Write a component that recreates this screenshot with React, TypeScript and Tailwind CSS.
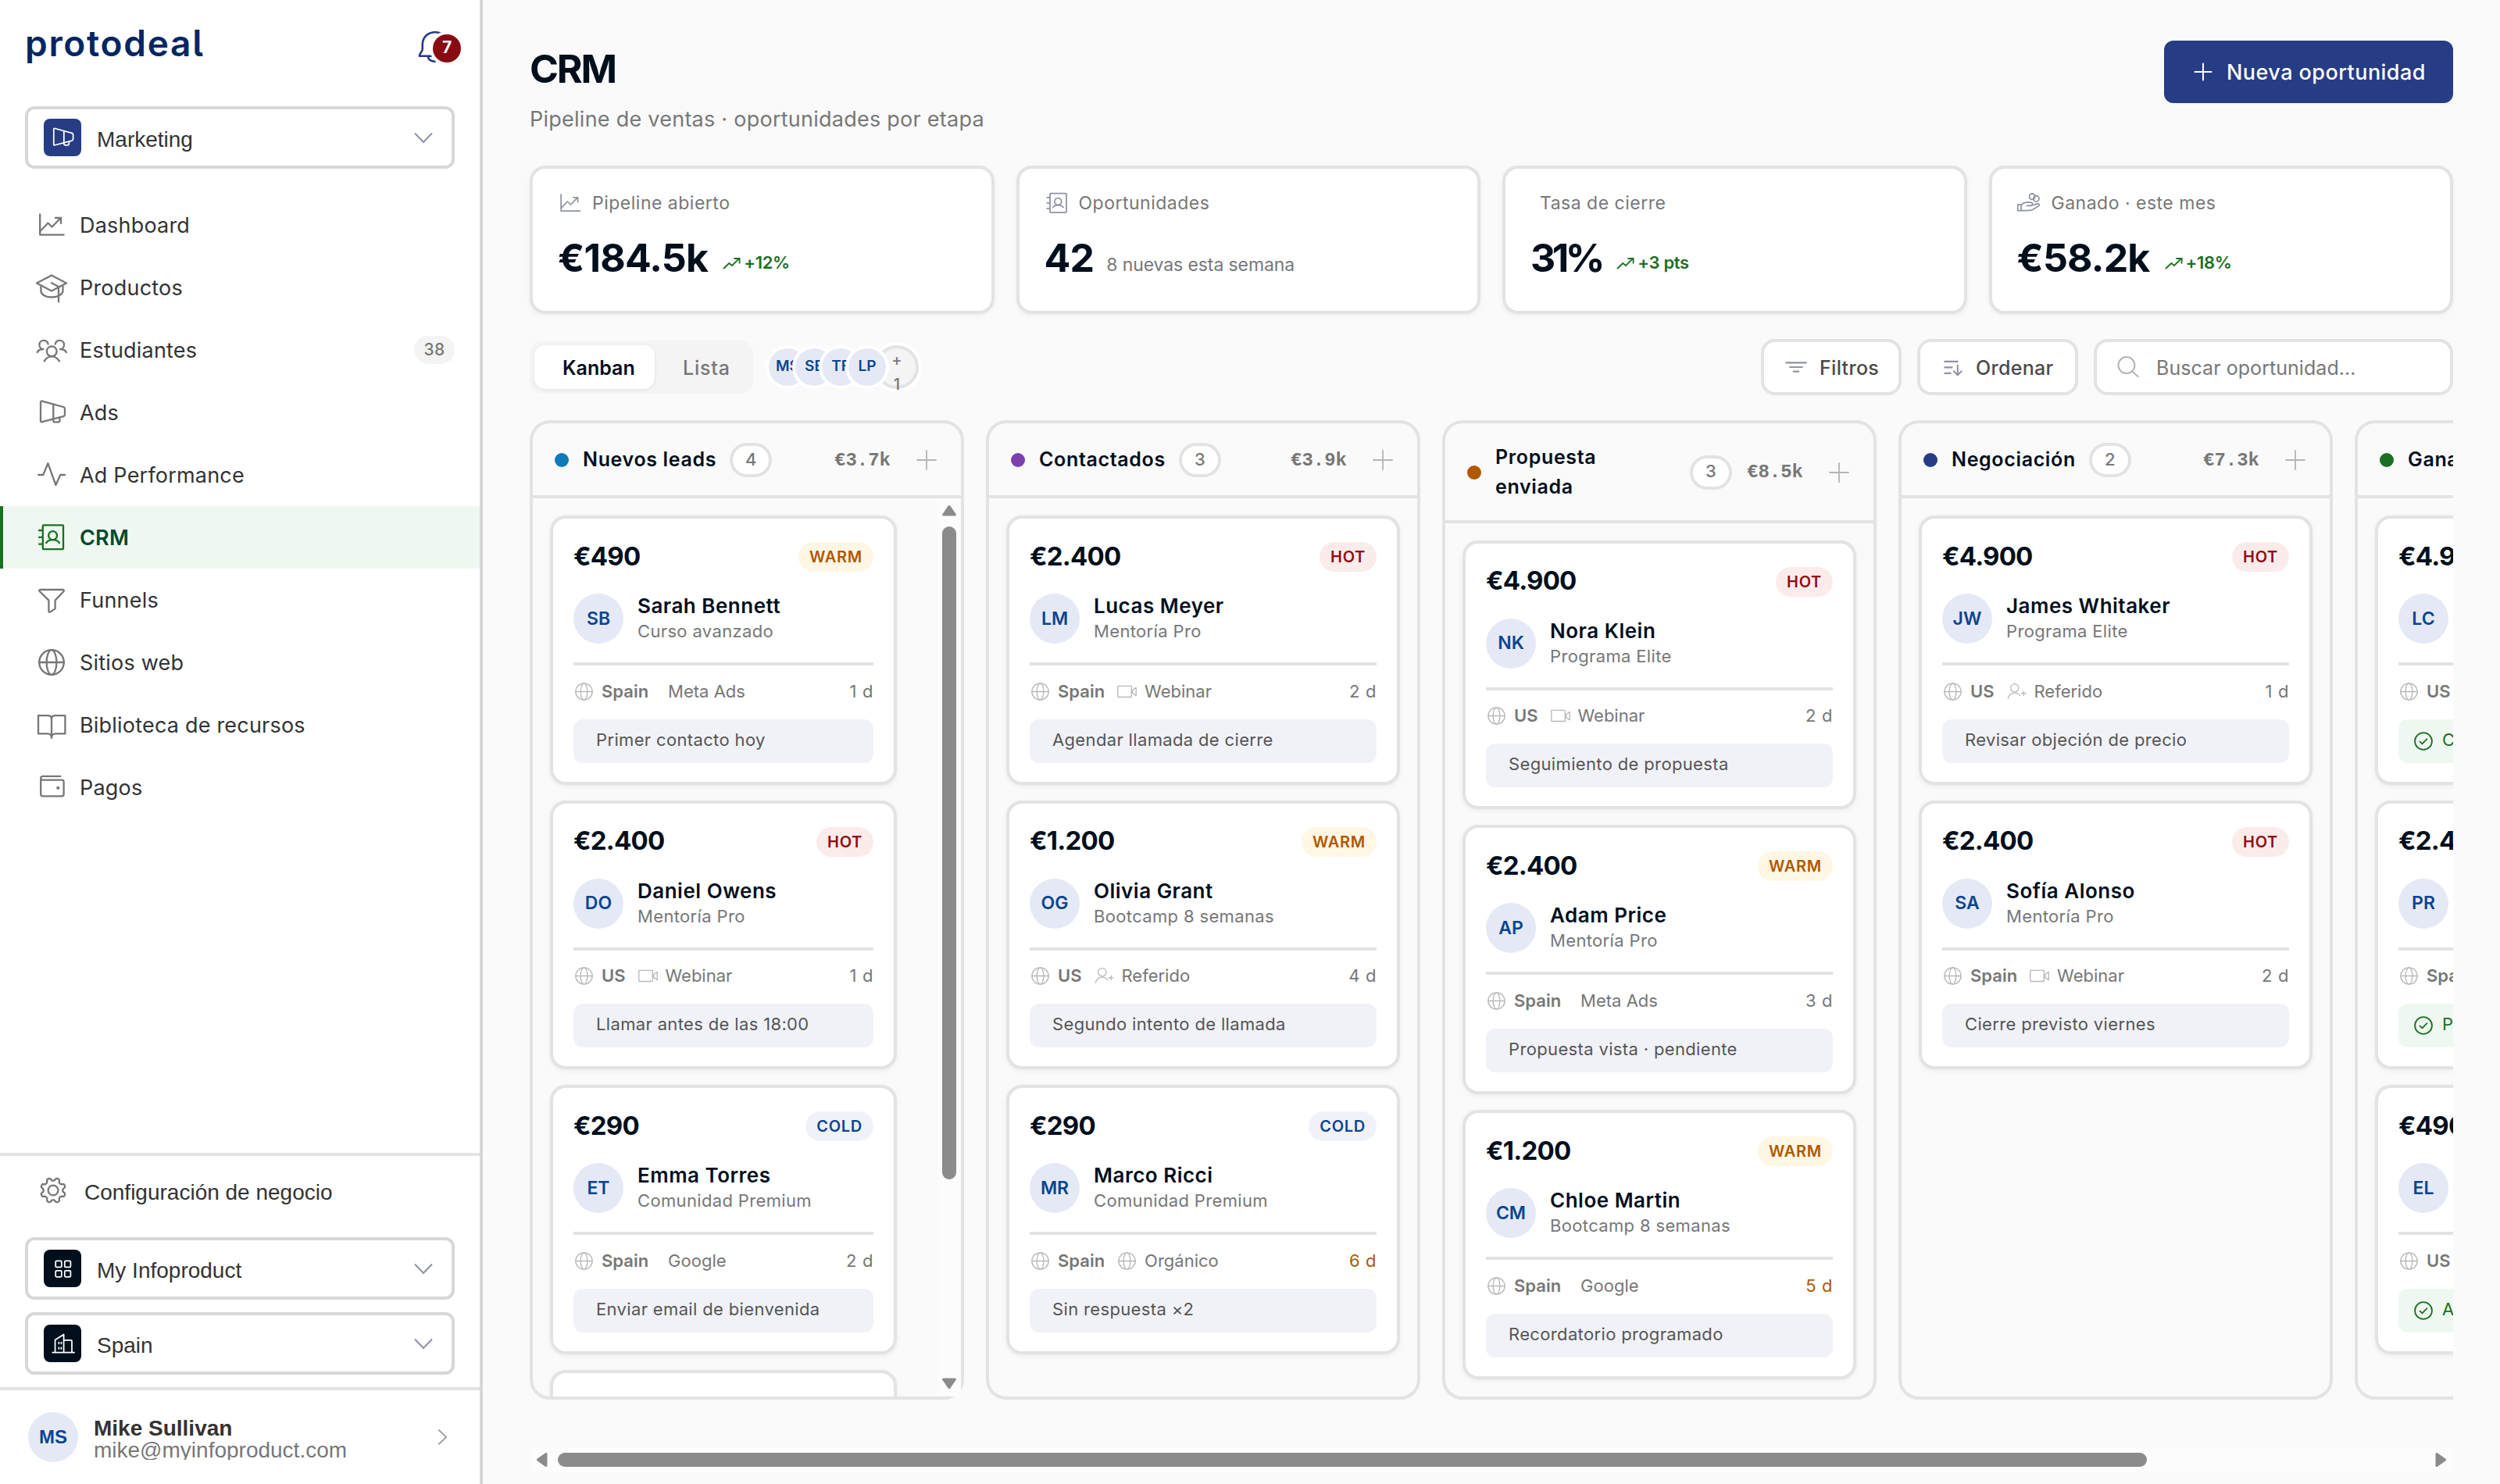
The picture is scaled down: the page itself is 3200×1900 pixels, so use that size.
import type { ReactNode } from 'react'

type Temp = 'WARM' | 'HOT' | 'COLD'
type Source = 'Webinar' | 'Referido' | 'Orgánico' | 'Meta Ads' | 'Google'

interface Deal {
  price: string
  temp: Temp
  initials: string
  name: string
  product: string
  country: string
  source: Source
  days: number
  note: string
  won?: boolean
}

interface Stage {
  title: string
  dot: string
  total: string
  deals: Deal[]
}

const STAGES: Stage[] = [
  {
    title: 'Nuevos leads',
    dot: 'bg-[#0c7bb8]',
    total: '€3.7k',
    deals: [
      { price: '€490', temp: 'WARM', initials: 'SB', name: 'Sarah Bennett', product: 'Curso avanzado', country: 'Spain', source: 'Meta Ads', days: 1, note: 'Primer contacto hoy' },
      { price: '€2.400', temp: 'HOT', initials: 'DO', name: 'Daniel Owens', product: 'Mentoría Pro', country: 'US', source: 'Webinar', days: 1, note: 'Llamar antes de las 18:00' },
      { price: '€290', temp: 'COLD', initials: 'ET', name: 'Emma Torres', product: 'Comunidad Premium', country: 'Spain', source: 'Google', days: 2, note: 'Enviar email de bienvenida' },
      { price: '€490', temp: 'WARM', initials: 'HP', name: 'Hugo Prieto', product: 'Curso avanzado', country: 'Spain', source: 'Meta Ads', days: 3, note: 'Primer contacto' },
    ],
  },
  {
    title: 'Contactados',
    dot: 'bg-[#7b3fb0]',
    total: '€3.9k',
    deals: [
      { price: '€2.400', temp: 'HOT', initials: 'LM', name: 'Lucas Meyer', product: 'Mentoría Pro', country: 'Spain', source: 'Webinar', days: 2, note: 'Agendar llamada de cierre' },
      { price: '€1.200', temp: 'WARM', initials: 'OG', name: 'Olivia Grant', product: 'Bootcamp 8 semanas', country: 'US', source: 'Referido', days: 4, note: 'Segundo intento de llamada' },
      { price: '€290', temp: 'COLD', initials: 'MR', name: 'Marco Ricci', product: 'Comunidad Premium', country: 'Spain', source: 'Orgánico', days: 6, note: 'Sin respuesta ×2' },
    ],
  },
  {
    title: 'Propuesta enviada',
    dot: 'bg-[#b05800]',
    total: '€8.5k',
    deals: [
      { price: '€4.900', temp: 'HOT', initials: 'NK', name: 'Nora Klein', product: 'Programa Elite', country: 'US', source: 'Webinar', days: 2, note: 'Seguimiento de propuesta' },
      { price: '€2.400', temp: 'WARM', initials: 'AP', name: 'Adam Price', product: 'Mentoría Pro', country: 'Spain', source: 'Meta Ads', days: 3, note: 'Propuesta vista · pendiente' },
      { price: '€1.200', temp: 'WARM', initials: 'CM', name: 'Chloe Martin', product: 'Bootcamp 8 semanas', country: 'Spain', source: 'Google', days: 5, note: 'Recordatorio programado' },
    ],
  },
  {
    title: 'Negociación',
    dot: 'bg-[#263c85]',
    total: '€7.3k',
    deals: [
      { price: '€4.900', temp: 'HOT', initials: 'JW', name: 'James Whitaker', product: 'Programa Elite', country: 'US', source: 'Referido', days: 1, note: 'Revisar objeción de precio' },
      { price: '€2.400', temp: 'HOT', initials: 'SA', name: 'Sofía Alonso', product: 'Mentoría Pro', country: 'Spain', source: 'Webinar', days: 2, note: 'Cierre previsto viernes' },
    ],
  },
  {
    title: 'Ganado',
    dot: 'bg-[#1b6f22]',
    total: '€7.8k',
    deals: [
      { price: '€4.900', temp: 'HOT', initials: 'LC', name: 'Laura Costa', product: 'Programa Elite', country: 'US', source: 'Webinar', days: 1, note: 'Cobrado', won: true },
      { price: '€2.400', temp: 'HOT', initials: 'PR', name: 'Pablo Ruiz', product: 'Mentoría Pro', country: 'Spain', source: 'Webinar', days: 2, note: 'Pagado', won: true },
      { price: '€490', temp: 'WARM', initials: 'EL', name: 'Eva López', product: 'Curso avanzado', country: 'US', source: 'Google', days: 3, note: 'Acceso enviado', won: true },
    ],
  },
]

const TEMP_STYLE: Record<Temp, string> = {
  WARM: 'bg-[#fff6e4] text-[#b05800]',
  HOT: 'bg-[#fcebeb] text-[#8f0d14]',
  COLD: 'bg-[#f0f2f9] text-[#0a4590]',
}

// scalloped outline of the settings gear, eight lobes
const GEAR = Array.from({ length: 96 }, (_, i) => {
  const a = (i / 96) * Math.PI * 2
  const r = 14.2 + 1.9 * Math.tanh(2 * Math.cos(8 * a + Math.PI))
  return `${(20 + r * Math.sin(a)).toFixed(2)},${(20 - r * Math.cos(a)).toFixed(2)}`
}).join(' ')

const ICONS: Record<string, ReactNode> = {
  chart: (
    <>
      <path d="M5.2 6.5V32.6H35.7" />
      <path d="M5.5 28 15.5 17.5 20.5 22.5 31.5 11.3M25 11H32V18" />
    </>
  ),
  cap: (
    <>
      <path d="M20 4.6 39 14.6 20 24.4 1 14.6Z" />
      <path d="M6.4 19V25C7 29.5 13 32.5 20 32.5S33.5 29.5 34.5 25V19" />
      <path d="M20 14.3 29 19V38.4" />
    </>
  ),
  people: (
    <>
      <circle cx="20.2" cy="21.8" r="6.4" />
      <path d="M10.7 34.4C13 30.5 16 28.4 20.2 28.4S27.5 30.5 29.8 34.4" />
      <path d="M15.6 12.4C15 9.5 12.8 7.8 10 7.8 6.8 7.8 4.4 10.2 4.4 13.4 4.4 16.6 6.6 19 9.4 19 6 19 3.2 20 1.6 23" />
      <path d="M24.8 12.4C25.4 9.5 27.6 7.8 30.4 7.8 33.6 7.8 36 10.2 36 13.4 36 16.6 33.8 19 31 19 34.4 19 37.2 20 38.8 23" />
    </>
  ),
  megaphone: (
    <>
      <path d="M6 7C6 5.8 6.8 5.3 8 5.6L35 13C36.4 13.4 37 14.4 37 15.6V22.6C37 24 36.4 24.8 35 25.2L8 32.2C6.8 32.5 6 32 6 30.8Z" />
      <path d="M22.3 10V28.4M22.3 28.6V30.4C22.3 31.6 23 32.4 24.2 32.4H28.4C29.7 32.4 30.4 31.6 30.4 30.4V26.6" />
    </>
  ),
  pulse: <path d="M3.2 20H9.2L15.4 5.3 25.4 33 31.2 20H37" />,
  contacts: (
    <>
      <rect x="8.8" y="4.4" width="26.2" height="30.8" rx="1" />
      <path d="M4 11H8.8M4 19.8H8.8M4 28.6H8.8" />
      <circle cx="21.6" cy="17.6" r="5.5" />
      <path d="M13.2 27C15 24.5 18 23.2 21.6 23.2S28.2 24.5 30 27" />
    </>
  ),
  funnel: (
    <path d="M5.5 7H34.5C36 7 36 8.4 35.4 9.2L24.6 20.6V31.4L18.5 35.4C17 36 16.4 35.4 16.4 34.2V20.6L4.8 9.2C4 8.4 4.2 7 5.5 7Z" />
  ),
  globe: (
    <>
      <circle cx="20" cy="20" r="15.8" />
      <ellipse cx="20" cy="20" rx="6.4" ry="15.8" />
      <path d="M4.2 20H35.8" />
    </>
  ),
  book: (
    <path d="M20 37C20 33 18 31.4 15 31.4H3V8.2H15C18 8.2 20 9.8 20 12.4V36 12.4C20 9.8 22 8.2 25 8.2H37.4V31.4H25C22 31.4 20 33 20 37Z" />
  ),
  wallet: (
    <>
      <path d="M31.3 5.8H9C7 5.8 6.2 6.8 6.2 8.4V28.6C6.2 30.6 7 31.4 8.8 31.4H33C35 31.4 35.6 30.6 35.6 28.8V13C35.6 11.2 35 10.6 33.2 10.6H8.4C7 10.6 6.2 10 6.2 8.4" />
      <circle cx="28.3" cy="20.8" r="1" fill="currentColor" />
    </>
  ),
  gear: (
    <>
      <polygon points={GEAR} />
      <circle cx="20" cy="20" r="6.4" />
    </>
  ),
  building: (
    <>
      <path d="M4 34.5H39M8.2 34.5V14.5L22 5.6V34.5M22 14.8H33.5C34.5 14.8 35 15.4 35 16.4V34.5" />
      <path d="M14.2 18.4V20.4M18 18.4V20.4M14.2 26.6V28.6M18 26.6V28.6" />
    </>
  ),
  grid: (
    <>
      <rect x="9" y="8" width="9.5" height="10" rx="1.5" />
      <rect x="23.5" y="8" width="9.5" height="10" rx="1.5" />
      <rect x="9" y="23.5" width="9.5" height="10" rx="1.5" />
      <rect x="23.5" y="23.5" width="9.5" height="10" rx="1.5" />
    </>
  ),
  coins: (
    <>
      <circle cx="24" cy="9.6" r="4.6" />
      <circle cx="30.4" cy="13" r="4.6" />
      <path d="M1 22.6H6.4V32H1Z" />
      <path d="M6.4 23C9 20.5 12 19 15 19H22C25.2 19 25.2 24.2 22 24.2H15.5M24.6 23.4L31.6 21C35 20 36.6 23.2 34 25L24 31C20.5 32.4 14 32 6.4 32" />
    </>
  ),
  filter: <path d="M3 12.5H37M9.5 20H30.5M15.5 27.5H24.5" />,
  sort: <path d="M7 10.5H29M7 20.5H19.5M7 30.5H17M29 17V33.5M22.4 27 29 33.7 35.6 27" />,
  search: (
    <>
      <circle cx="18.6" cy="16.8" r="14" />
      <path d="M29 28 38.4 36.4" />
    </>
  ),
  video: (
    <>
      <rect x="2.6" y="9.4" width="26" height="21" rx="1" />
      <path d="M30.6 17.4 37.4 12.4V27.8L30.6 22.8Z" />
    </>
  ),
  referral: (
    <>
      <circle cx="16" cy="13" r="7.6" />
      <path d="M3.4 33C5.4 26.4 10 22.4 16 22.4S24 24 26.6 27.6" />
      <path d="M33 19.4V27.4M29 23.4H37" />
    </>
  ),
  check: (
    <>
      <circle cx="20" cy="20" r="15.6" />
      <path d="M13.6 20.8 17.8 24.8 26.4 16" />
    </>
  ),
  plus: <path d="M20 5V35M5 20H35" />,
}

function Icon({ name, className, weight = 2.3 }: { name: string; className: string; weight?: number }) {
  return (
    <svg
      viewBox="0 0 40 40"
      fill="none"
      stroke="currentColor"
      strokeWidth={weight}
      strokeLinecap="round"
      strokeLinejoin="round"
      className={`shrink-0 ${className}`}
    >
      {ICONS[name]}
    </svg>
  )
}

function Chevron({ className = '' }: { className?: string }) {
  return (
    <svg
      viewBox="0 0 28 28"
      fill="none"
      stroke="currentColor"
      strokeWidth="2"
      className={`size-7 shrink-0 text-[#8e94a3] ${className}`}
    >
      <path d="M3 8.5 14 20 25 8.5" />
    </svg>
  )
}

const NAV = [
  { icon: 'chart', label: 'Dashboard' },
  { icon: 'cap', label: 'Productos' },
  { icon: 'people', label: 'Estudiantes', count: 38 },
  { icon: 'megaphone', label: 'Ads' },
  { icon: 'pulse', label: 'Ad Performance' },
  { icon: 'contacts', label: 'CRM', active: true },
  { icon: 'funnel', label: 'Funnels' },
  { icon: 'globe', label: 'Sitios web' },
  { icon: 'book', label: 'Biblioteca de recursos' },
  { icon: 'wallet', label: 'Pagos' },
]

function Select({ icon, label, tone }: { icon: string; label: string; tone: string }) {
  return (
    <div className="flex h-20 items-center rounded-xl border-4 border-[#d7d7d7] bg-white px-5 font-['Liberation_Sans',sans-serif]">
      <span className={`flex size-12 items-center justify-center rounded-lg text-white ${tone}`}>
        <Icon name={icon} className="size-8" weight={2.2} />
      </span>
      <span className="ml-5 flex-1 pt-[5px] text-[28px] leading-8 text-[#333]">{label}</span>
      <Chevron className="mr-0.5" />
    </div>
  )
}

function Sidebar() {
  return (
    <aside className="flex h-full w-[618px] shrink-0 flex-col border-r-4 border-[#d7d7d7] bg-white">
      <div className="flex h-[136px] shrink-0 items-start justify-between px-8 pt-[30px]">
        <span className="text-[46px] leading-[50px] font-semibold tracking-[1.7px] text-[#002663] [font-feature-settings:'cv05']">
          protodeal
        </span>
        <div className="relative mt-2 h-11 w-[50px]">
          <svg viewBox="0 0 50 44" fill="none" stroke="#263c85" strokeWidth="2.6" strokeLinecap="round" strokeLinejoin="round">
            <path d="M25 3.2C15.5 3.2 9.2 9.4 8.8 18.5V24.5C8.8 28.5 5 30 4.8 33.8H45.2C45 30 41.2 28.5 41.2 24.5V18.5C40.8 9.4 34.5 3.2 25 3.2Z" />
            <path d="M15.8 34.4C16.6 38.4 20 40.6 25 40.6" />
          </svg>
          <span className="absolute top-1.5 -right-2 flex size-9 items-center justify-center rounded-full bg-[#8a0a12] pb-0.5 text-[21px] font-bold text-white ring-4 ring-white">
            7
          </span>
        </div>
      </div>
      <div className="px-8">
        <Select icon="megaphone" label="Marketing" tone="bg-[#263c85]" />
      </div>

      <nav className="mt-8 flex flex-1 flex-col">
        {NAV.map((n) => (
          <a
            key={n.label}
            className={`flex h-20 items-center border-l-4 pr-8 pl-[42px] text-[27px] tracking-[0.2px] ${
              n.active
                ? 'border-[#1b6f22] bg-[#eef8f0] font-semibold text-[#044a2c]'
                : 'border-transparent text-[#333]'
            }`}
          >
            <Icon name={n.icon} className={`size-10 ${n.active ? 'text-[#1b6f22]' : 'text-[#777]'}`} />
            <span className="ml-4 flex-1 pt-0.5">{n.label}</span>
            {n.count && (
              <span className="flex h-9 w-[52px] items-center justify-center rounded-full bg-[#f4f4f4] text-[21px] font-medium text-[#777]">
                {n.count}
              </span>
            )}
          </a>
        ))}
      </nav>

      <div className="flex h-[300px] shrink-0 flex-col border-t-4 border-[#e4e2e3] px-8 font-['Liberation_Sans',sans-serif]">
        <div className="flex h-[104px] items-center pb-4 pl-4">
          <Icon name="gear" className="size-10 text-[#777]" />
          <span className="ml-5 pt-[5px] text-[28px] leading-8 text-[#333]">Configuración de negocio</span>
        </div>
        <div className="flex flex-col gap-4">
          <Select icon="grid" label="My Infoproduct" tone="bg-[#010f1c]" />
          <Select icon="building" label="Spain" tone="bg-[#010f1c]" />
        </div>
      </div>

      <div className="flex h-[124px] shrink-0 items-center border-t-4 border-[#e4e2e3] pr-[34px] pl-9 font-['Liberation_Sans',sans-serif]">
        <span className="flex size-16 items-center justify-center rounded-full bg-[#e5e9f6] text-2xl font-bold text-[#0a4590]">
          MS
        </span>
        <div className="mt-[3px] ml-5 flex-1 text-[28px] leading-7">
          <p className="font-bold text-[#333]">Mike Sullivan</p>
          <p className="h-[26px] overflow-hidden text-[#777]">mike@myinfoproduct.com</p>
        </div>
        <Chevron className="scale-85 -rotate-90" />
      </div>
    </aside>
  )
}

function Stat({
  icon,
  label,
  value,
  valueClass = 'tracking-[-0.8px]',
  children,
}: {
  icon?: string
  label: string
  value: string
  valueClass?: string
  children: ReactNode
}) {
  return (
    <div className="flex h-[190px] flex-col rounded-[20px] border-4 border-[#e4e2e3] bg-white px-8 pt-7 shadow-[0_2px_6px_rgba(0,0,0,0.05)]">
      <div className="flex h-8 items-center gap-3">
        {icon && <Icon name={icon} className="size-8 text-[#8e94a3]" weight={2.2} />}
        <span className={`text-[23px] tracking-[0.5px] text-[#777] ${icon ? '' : 'pl-3'}`}>{label}</span>
      </div>
      <div className="mt-[19px] flex h-[71px] items-center gap-4">
        <span className={`text-[50px] font-bold text-[#010f1c] ${valueClass}`}>{value}</span>
        {children}
      </div>
    </div>
  )
}

function Trend({ children }: { children: ReactNode }) {
  return (
    <span className="mt-3 flex items-center gap-[3px] pl-px text-[22px] font-semibold tracking-[-0.3px] text-[#1b6f22]">
      <svg viewBox="0 0 26 22" fill="none" stroke="currentColor" strokeWidth="1.8" className="h-[22px] w-[26px]">
        <path d="M3 18 10.3 11 14 14 23 5.2M16.4 5H23.6V11.4" />
      </svg>
      {children}
    </span>
  )
}

function Toolbar() {
  return (
    <div className="mt-8 flex h-[72px] items-center text-[25px]">
      <div className="flex h-[68px] items-center rounded-2xl bg-[#f4f4f4] px-1.5">
        <span className="flex h-14 w-[154px] items-center rounded-[14px] bg-white pt-[3px] pl-9 font-semibold text-[#010f1c] shadow-[0_1px_4px_rgba(0,0,0,0.08)]">
          Kanban
        </span>
        <span className="flex h-14 w-[120px] items-center pt-[3px] pl-9 font-medium tracking-[0.8px] text-[#777]">
          Lista
        </span>
      </div>
      <div className="ml-5 flex items-center -space-x-3.5">
        {['MS', 'SE', 'TF', 'LP'].map((m) => (
          <span
            key={m}
            className="relative flex size-12 items-center justify-center rounded-full bg-[#e5e9f6] pb-0.5 text-[19px] font-semibold text-[#0a4590] ring-4 ring-white"
          >
            {m}
          </span>
        ))}
        <span className="flex size-14 flex-col items-center rounded-full border-4 border-[#e4e2e3] bg-[#f4f4f4] text-[20px] leading-[31px] font-medium text-[#777] ring-4 ring-white">
          <span>+</span>
          <span>1</span>
        </span>
      </div>

      <div className="ml-auto flex gap-5 tracking-[0.3px]">
        <span className="flex h-[72px] w-[180px] items-center rounded-[18px] border-4 border-[#e4e2e3] bg-white pl-[26px] font-medium text-[#4a4a4a]">
          <Icon name="filter" className="mr-[15px] size-[30px] text-[#8e94a3]" weight={2.7} />
          <span className="pt-[3px]">Filtros</span>
        </span>
        <span className="flex h-[72px] w-[206px] items-center rounded-[18px] border-4 border-[#e4e2e3] bg-white pl-[26px] font-medium text-[#4a4a4a]">
          <Icon name="sort" className="mr-[15px] size-[30px] text-[#8e94a3]" weight={2.7} />
          <span className="pt-[3px]">Ordenar</span>
        </span>
        <span className="flex h-[72px] w-[460px] items-center rounded-[18px] border-4 border-[#e4e2e3] bg-white pl-6 tracking-[0.05px] text-[#777]">
          <Icon name="search" className="mr-[22px] size-[30px] text-[#b5b5b5]" weight={2.7} />
          <span className="pt-[3px]">Buscar oportunidad…</span>
        </span>
      </div>
    </div>
  )
}

const SOURCE_ICON: Partial<Record<Source, string>> = {
  Webinar: 'video',
  Referido: 'referral',
  Orgánico: 'globe',
}

function DealCard({ deal }: { deal: Deal }) {
  const sourceIcon = SOURCE_ICON[deal.source]
  return (
    <article className="flex h-[344.67px] shrink-0 flex-col rounded-[20px] border-4 border-[#e4e2e3] bg-white px-[26px] pt-6 shadow-[0_2px_6px_rgba(0,0,0,0.06)]">
      <div className="flex h-12 items-center justify-between">
        <span className="pt-px text-[33px] font-bold tracking-[-0.8px] text-[#010f1c]">{deal.price}</span>
        <span
          className={`mt-0.5 flex h-[38px] items-center rounded-full px-3.5 text-[20px] font-semibold tracking-[0.7px] ${TEMP_STYLE[deal.temp]}`}
        >
          {deal.temp}
        </span>
      </div>
      <div className="mt-6 flex h-16 items-center gap-[18px]">
        <span className="flex size-16 items-center justify-center rounded-full bg-[#e5e9f6] text-[23px] font-semibold text-[#0a4590]">
          {deal.initials}
        </span>
        <div className="-my-1 leading-[33px] whitespace-nowrap">
          <p className="text-[26px] font-semibold tracking-[0.5px] text-[#010f1c]">{deal.name}</p>
          <p className="text-[22px] tracking-[0.35px] text-[#777]">{deal.product}</p>
        </div>
      </div>
      <div className="mt-6 flex h-[54.67px] items-center border-t-4 border-[#e2e2e2] pt-4 text-[22px] text-[#777]">
        <Icon name="globe" className="mr-[9px] size-[27px] text-[#b9b9b9]" weight={2} />
        <span className="font-semibold">{deal.country}</span>
        {sourceIcon ? (
          <Icon name={sourceIcon} className="mr-[9px] ml-[15px] size-[27px] text-[#b9b9b9]" weight={2} />
        ) : (
          <span className="w-[25px]" />
        )}
        <span>{deal.source}</span>
        <span className={`ml-auto tracking-[0.6px] ${deal.days >= 5 ? 'text-[#b05800]' : ''}`}>{deal.days} d</span>
      </div>
      <div
        className={`mt-[18px] flex h-14 items-center rounded-xl pb-[3px] text-[22px] tracking-[0.35px] whitespace-nowrap ${
          deal.won ? 'bg-[#eef8f0] pl-[18px] text-[#1b6f22]' : 'bg-[#f1f2f8] pl-[29px] text-[#555]'
        }`}
      >
        {deal.won && <Icon name="check" className="mt-[3px] mr-2.5 size-7" weight={2.6} />}
        {deal.note}
      </div>
    </article>
  )
}

function Column({ stage, scrolls }: { stage: Stage; scrolls: boolean }) {
  const wraps = stage.title.length > 14
  return (
    <section className="flex h-full w-[556px] shrink-0 flex-col rounded-[26px] border-4 border-[#e4e2e3] bg-[#fafafa]">
      <header className="flex shrink-0 items-center border-b-4 border-[#e4e2e3] px-7 pt-[25px] pb-[23px]">
        <span className={`size-[18px] shrink-0 rounded-full ${stage.dot}`} />
        <h2
          className={`mr-[17px] ml-[18px] text-[25px] leading-[37.8px] font-semibold tracking-[0.65px] text-[#010f1c] ${
            wraps ? 'w-[232px]' : ''
          }`}
        >
          {stage.title}
        </h2>
        <span className="flex h-11 w-[54px] shrink-0 items-center justify-center rounded-full border-4 border-[#e4e2e3] bg-white pb-0.5 text-[22px] font-medium text-[#777]">
          {stage.deals.length}
        </span>
        <span className="ml-auto font-['Liberation_Mono',monospace] text-2xl leading-[37px] font-bold text-[#777]">
          {stage.total}
        </span>
        <Icon name="plus" className="ml-[30px] size-8 text-[#b5b5b5]" />
      </header>
      <div className="flex min-h-0 flex-1">
        <div className="flex min-w-0 flex-1 flex-col gap-5 overflow-hidden px-[22px] pt-[22px]">
          {stage.deals.map((d) => (
            <DealCard key={d.initials} deal={d} />
          ))}
        </div>
        {scrolls && (
          <div className="ml-[30px] flex w-[30px] flex-col items-center bg-[#fcfcfc] pt-[7px] pb-2">
            <Arrow className="rotate-90" />
            <div className="mt-[11px] h-[836px] w-[18px] rounded-full bg-[#8b8b8b]" />
            <Arrow className="mt-auto -rotate-90" />
          </div>
        )}
      </div>
    </section>
  )
}

function Arrow({ className = '' }: { className?: string }) {
  return (
    <svg viewBox="0 0 18 18" className={`size-[18px] shrink-0 ${className}`} fill="#8b8b8b" stroke="#8b8b8b" strokeWidth="3" strokeLinejoin="round">
      <path d="M14 1.6V16.4L3.4 9Z" />
    </svg>
  )
}

export default function App() {
  return (
    <div className="flex h-[1900px] w-[3200px] overflow-hidden bg-[#fafafa] font-['Inter',sans-serif]">
      <Sidebar />
      <main className="flex min-w-0 flex-1 flex-col px-[60px] pt-[52px]">
        <div className="flex items-start justify-between">
          <div>
            <h1 className="text-[50px] leading-[72px] font-bold tracking-[-2.2px] text-[#010f1c]">CRM</h1>
            <p className="mt-[9px] h-[39px] text-[27px] leading-10 tracking-[0.25px] text-[#777]">
              Pipeline de ventas · oportunidades por etapa
            </p>
          </div>
          <button
            type="button"
            className="flex h-20 w-[370px] items-center rounded-xl bg-[#263c85] pl-9 text-[27px] font-medium tracking-[0.45px] whitespace-nowrap text-white"
          >
            <Icon name="plus" className="mr-4 size-7" weight={2.8} />
            <span className="pt-0.5">Nueva oportunidad</span>
          </button>
        </div>

        <div className="mt-10 grid grid-cols-4 gap-7">
          <Stat icon="chart" label="Pipeline abierto" value="€184.5k">
            <Trend>+12%</Trend>
          </Stat>
          <Stat icon="contacts" label="Oportunidades" value="42">
            <span className="mt-[18px] text-[23px] tracking-[-0.1px] text-[#777]">8 nuevas esta semana</span>
          </Stat>
          <Stat label="Tasa de cierre" value="31%" valueClass="tracking-[-4.5px]">
            <Trend>+3 pts</Trend>
          </Stat>
          <Stat icon="coins" label="Ganado · este mes" value="€58.2k">
            <Trend>+18%</Trend>
          </Stat>
        </div>

        <Toolbar />

        <div className="mt-8 flex h-[1254px] gap-7 overflow-hidden">
          {STAGES.map((s) => (
            <Column key={s.title} stage={s} scrolls={s.deals.length > 3} />
          ))}
        </div>

        <div className="mt-[62px] flex h-[30px] items-center bg-[#fcfcfc] px-[7px]">
          <Arrow />
          <div className="ml-[11px] h-[18px] w-[2034px] rounded-full bg-[#8b8b8b]" />
          <Arrow className="ml-auto rotate-180" />
        </div>
      </main>
    </div>
  )
}
